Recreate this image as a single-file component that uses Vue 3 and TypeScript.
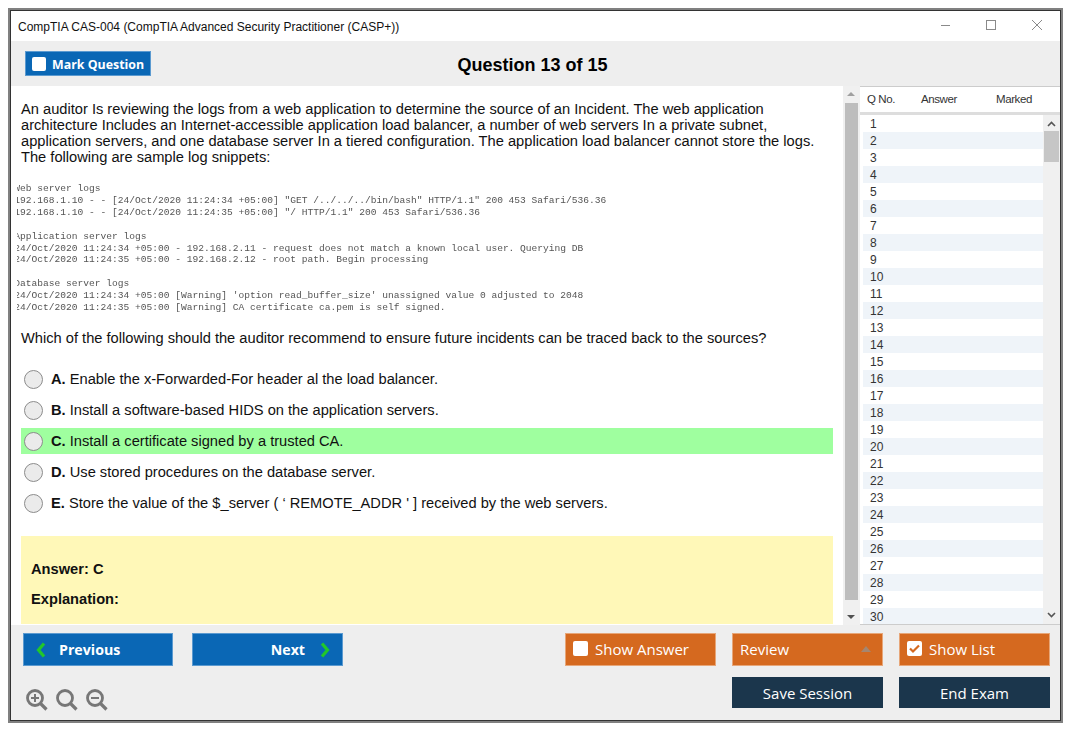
<script setup lang="ts">
const intro =
  'An auditor Is reviewing the logs from a web application to determine the source of an Incident. The web application architecture Includes an Internet-accessible application load balancer, a number of web servers In a private subnet, application servers, and one database server In a tiered configuration. The application load balancer cannot store the logs. The following are sample log snippets:'
const logs = `Web server logs
192.168.1.10 - - [24/Oct/2020 11:24:34 +05:00] "GET /../../../bin/bash" HTTP/1.1" 200 453 Safari/536.36
192.168.1.10 - - [24/Oct/2020 11:24:35 +05:00] "/ HTTP/1.1" 200 453 Safari/536.36

Application server logs
24/Oct/2020 11:24:34 +05:00 - 192.168.2.11 - request does not match a known local user. Querying DB
24/Oct/2020 11:24:35 +05:00 - 192.168.2.12 - root path. Begin processing

Database server logs
24/Oct/2020 11:24:34 +05:00 [Warning] 'option read_buffer_size' unassigned value 0 adjusted to 2048
24/Oct/2020 11:24:35 +05:00 [Warning] CA certificate ca.pem is self signed.`
const options = [
  { key: 'A', text: 'Enable the x-Forwarded-For header al the load balancer.', ok: false },
  { key: 'B', text: 'Install a software-based HIDS on the application servers.', ok: false },
  { key: 'C', text: 'Install a certificate signed by a trusted CA.', ok: true },
  { key: 'D', text: 'Use stored procedures on the database server.', ok: false },
  { key: 'E', text: "Store the value of the $_server ( ‘ REMOTE_ADDR ' ] received by the web servers.", ok: false },
]
const rows: number[] = Array.from({ length: 30 }, (_, i) => i + 1)
</script>

<template>
  <div class="window">
    <header class="titlebar">
      <span class="title">CompTIA CAS-004 (CompTIA Advanced Security Practitioner (CASP+))</span>
      <div class="controls">
        <svg width="12" height="12" viewBox="0 0 12 12"><path d="M2 6.5h9" stroke="#8a8a8a" fill="none" /></svg>
        <svg width="12" height="12" viewBox="0 0 12 12"><rect x="1.5" y="1.5" width="9" height="9" stroke="#8a8a8a" fill="none" /></svg>
        <svg width="12" height="12" viewBox="0 0 12 12"><path d="M1 1l10 10M11 1L1 11" stroke="#8a8a8a" fill="none" /></svg>
      </div>
    </header>

    <div class="toolbar">
      <button class="btn mark"><span class="check small"></span>Mark Question</button>
      <h1>Question 13 of 15</h1>
    </div>

    <div class="main">
      <section class="question">
        <p class="intro">{{ intro }}</p>
        <div class="logs"><pre>{{ logs }}</pre></div>
        <p class="ask">Which of the following should the auditor recommend to ensure future incidents can be traced back to the sources?</p>
        <ul class="options">
          <li v-for="o in options" :key="o.key" :class="{ ok: o.ok }">
            <span class="radio"></span>
            <span><b>{{ o.key }}.</b> {{ o.text }}</span>
          </li>
        </ul>
        <div class="answer">
          <p>Answer: C</p>
          <p>Explanation:</p>
        </div>
      </section>

      <div class="vscroll">
        <i class="arrow up"></i>
        <div class="thumb"></div>
        <i class="arrow down"></i>
      </div>

      <aside class="list">
        <div class="list-head">
          <span class="c1">Q No.</span><span class="c2">Answer</span><span class="c3">Marked</span>
        </div>
        <div class="list-body">
          <div class="rows">
            <div v-for="n in rows" :key="n" class="row">{{ n }}</div>
          </div>
          <div class="list-scroll">
            <svg class="chev" width="9" height="6" viewBox="0 0 9 6"><path d="M1 5l3.5-3.5L8 5" stroke="#555" stroke-width="1.6" fill="none" /></svg>
            <div class="list-thumb"></div>
            <svg class="chev end" width="9" height="6" viewBox="0 0 9 6"><path d="M1 1l3.5 3.5L8 1" stroke="#555" stroke-width="1.6" fill="none" /></svg>
          </div>
        </div>
      </aside>
    </div>

    <footer class="footer">
      <button class="btn blue prev">
        <svg width="10" height="16" viewBox="0 0 10 16"><path d="M8 1.5L2.5 8 8 14.5" stroke="#22c72a" stroke-width="3.2" fill="none" /></svg>
        Previous
      </button>
      <button class="btn blue next">
        Next
        <svg width="10" height="16" viewBox="0 0 10 16"><path d="M2 1.5L7.5 8 2 14.5" stroke="#22c72a" stroke-width="3.2" fill="none" /></svg>
      </button>
      <div class="spacer"></div>
      <button class="btn orange"><span class="check"></span>Show Answer</button>
      <button class="btn orange review">Review<i class="tri"></i></button>
      <button class="btn orange">
        <span class="check">
          <svg width="15" height="15" viewBox="0 0 15 15"><path d="M3 7.5l3 3 6-6" stroke="#d5691f" stroke-width="2.2" fill="none" /></svg>
        </span>
        Show List
      </button>

      <div class="zoom">
        <svg width="22" height="22" viewBox="0 0 22 22"><circle cx="9" cy="9" r="7.5" stroke="#777" stroke-width="2.8" fill="none" /><path d="M14.5 14.5L20.5 20.5" stroke="#777" stroke-width="3.2" /><path d="M5 9h8M9 5v8" stroke="#777" stroke-width="2" /></svg>
        <svg width="22" height="22" viewBox="0 0 22 22"><circle cx="9" cy="9" r="7.5" stroke="#777" stroke-width="2.8" fill="none" /><path d="M14.5 14.5L20.5 20.5" stroke="#777" stroke-width="3.2" /></svg>
        <svg width="22" height="22" viewBox="0 0 22 22"><circle cx="9" cy="9" r="7.5" stroke="#777" stroke-width="2.8" fill="none" /><path d="M14.5 14.5L20.5 20.5" stroke="#777" stroke-width="3.2" /><path d="M5 9h8" stroke="#777" stroke-width="2" /></svg>
      </div>
      <button class="btn navy save">Save Session</button>
      <button class="btn navy end">End Exam</button>
    </footer>
  </div>
</template>

<style>
html, body { background: #fff; }
</style>

<style scoped>
* { box-sizing: border-box; }
.window {
  margin: 8px 0 0 8px;
  width: 1055px;
  height: 715px;
  border: 2px solid #808080;
  outline: 1px solid #333;
  outline-offset: -3px;
  padding: 1px;
  display: flex;
  flex-direction: column;
  background: #eee;
  font-family: "Liberation Sans", Arial, sans-serif;
  color: #111;
}
.titlebar {
  height: 30px;
  flex: none;
  background: #fff;
  display: flex;
  align-items: center;
  justify-content: space-between;
  padding: 2px 17px 0 7px;
}
.title { font-size: 12px; }
.controls { display: flex; gap: 34px; margin-top: -4px; }
.toolbar {
  height: 45px;
  flex: none;
  position: relative;
  display: flex;
  align-items: center;
  justify-content: center;
}
.toolbar h1 { margin: 4px 0 0 0; font-size: 18px; font-weight: 700; color: #000; position: relative; left: -3px; }
.btn {
  border: 1px solid transparent;
  font-family: "Open Sans", sans-serif;
  color: #fff;
  display: flex;
  align-items: center;
  white-space: nowrap;
  font-size: 15px;
  padding: 0 7px;
  width: 100%;
  height: 100%;
}
.mark {
  position: absolute;
  left: 14px;
  top: 10px;
  width: 126px;
  height: 25px;
  background: #0a67b5;
  border-color: #5b9ad0;
  font-size: 12.4px;
  font-weight: 700;
  padding: 1px 7px 0 6px;
}
.check {
  width: 15px;
  height: 15px;
  background: #fff;
  border-radius: 2px;
  margin-right: 7px;
  flex: none;
  display: inline-flex;
}
.check.small { width: 14px; height: 14px; margin-right: 6px; }
.main { height: 539px; flex: none; display: flex; background: #fff; overflow: hidden; }
.question { width: 832px; height: 538px; flex: none; padding: 15px 0 0 10px; display: flex; flex-direction: column; overflow: hidden; }
.intro { margin: 0; width: 800px; font-size: 14.67px; line-height: 16px; flex: none; }
.logs { margin: 18px 0 0 -4px; width: 816px; overflow: hidden; height: 136px; flex: none; }
.logs pre {
  margin: 0 0 0 -2.7px;
  font-family: "Liberation Mono", monospace;
  font-size: 9.58px;
  line-height: 11.9px;
  color: #555;
  filter: blur(0.35px);
}
.ask { margin: 11px 0 0; font-size: 14.67px; line-height: 17px; flex: none; }
.options { list-style: none; margin: 19px 0 0; padding: 0; flex: none; }
.options li {
  height: 26px;
  margin-bottom: 5px;
  width: 812px;
  display: flex;
  align-items: center;
  font-size: 14.67px;
  padding-left: 3px;
}
.options li.ok { background: #9fff9f; }
.radio {
  width: 19px;
  height: 19px;
  border-radius: 50%;
  background: #ebebeb;
  border: 1px solid #8c8c8c;
  margin-right: 8px;
  flex: none;
}
.answer {
  margin-top: 15px;
  width: 812px;
  height: 100px;
  flex: none;
  background: #fff8b8;
  padding: 25px 10px;
  font-weight: 700;
  font-size: 14.67px;
}
.answer p { margin: 0 0 13px; line-height: 17px; }
.vscroll {
  width: 17px;
  flex: none;
  background: #f0f0f0;
  display: flex;
  flex-direction: column;
  align-items: center;
  justify-content: space-between;
  padding: 6px 2px 6px 0;
  position: relative;
}
.thumb { position: absolute; left: 2px; top: 17px; width: 13px; height: 497px; background: #bdbdbd; }
.arrow { width: 0; height: 0; border-left: 4px solid transparent; border-right: 4px solid transparent; }
.arrow.up { border-bottom: 4px solid #a0a0a0; }
.arrow.down { border-top: 4px solid #505050; }
.list {
  width: 200px;
  flex: none;
  display: flex;
  flex-direction: column;
  font-size: 12px;
  color: #333;
  border-bottom: 1px solid #ccc;
}
.list-head {
  height: 29px;
  flex: none;
  border-top: 1px solid #ccc;
  border-bottom: 3px solid #ddd;
  display: flex;
  align-items: center;
  letter-spacing: -0.4px;
  font-size: 11.5px;
  padding-bottom: 1px;
}
.c1 { margin-left: 7px; width: 54px; }
.c2 { width: 75px; }
.list-body { flex: 1; display: flex; min-height: 0; overflow: hidden; }
.rows { width: 180px; margin-left: 3px; flex: none; }
.row { height: 17.03px; line-height: 19px; padding-left: 7px; }
.row:nth-child(even) { background: #eff4f9; }
.list-scroll {
  flex: 1;
  background: #f0f0f0;
  position: relative;
  display: flex;
  flex-direction: column;
  align-items: center;
  padding: 6px 1px 6px 0;
}
.chev.end { margin-top: auto; }
.list-thumb { position: absolute; top: 16px; left: 1px; width: 15px; height: 31px; background: #c6c6c6; }
.footer {
  flex: 1;
  display: grid;
  grid-template-columns: 150px 150px 1fr 151px 151px 151px;
  grid-template-rows: 33px 31px;
  column-gap: 16px;
  row-gap: 11px;
  padding: 8px 10px 0 12px;
}
.blue { background: #0a67b5; border-color: #5b9ad0; font-weight: 700; font-size: 14.2px; }
.prev { padding-left: 12px; }
.prev svg { margin-right: 13px; }
.next { justify-content: flex-end; padding-right: 12px; margin-left: 3px; width: 151px; }
.next svg { margin-left: 15px; }
.orange { background: #d5691f; border-color: #e7a678; padding-bottom: 2px; }
.review { justify-content: space-between; }
.tri { width: 0; height: 0; border-left: 5px solid transparent; border-right: 5px solid transparent; border-bottom: 6px solid #a58670; margin-right: 4px; }
.navy { background: #1b364c; justify-content: center; }
.zoom { grid-column: 1 / 5; display: flex; gap: 8px; padding: 12px 0 0 3px; }
.save { grid-column: 5; }
.end { grid-column: 6; }
</style>
